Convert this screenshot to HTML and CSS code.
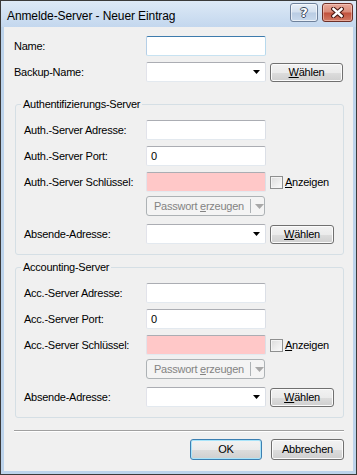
FILE: index.html
```html
<!DOCTYPE html>
<html>
<head>
<meta charset="utf-8">
<link rel="stylesheet" href="styles.css">
</head>
<body>
<div class="window">
  <div class="titlebar">
    <span class="title">Anmelde-Server - Neuer Eintrag</span>
    <div class="tbuttons">
      <div class="tbtn help"><span class="q">?</span></div>
      <div class="tbtn close">
        <svg width="13" height="11" viewBox="0 0 13 11">
          <path d="M2.5 2 L10.5 9 M10.5 2 L2.5 9" stroke="#4a1a14" stroke-width="4.6" stroke-linecap="square" fill="none"/>
          <path d="M2.5 2 L10.5 9 M10.5 2 L2.5 9" stroke="#ffffff" stroke-width="2.4" stroke-linecap="square" fill="none"/>
        </svg>
      </div>
    </div>
  </div>
  <div class="frame">
    <div class="content">
      <div class="row">
        <span class="lbl">Name:</span>
        <div class="input focus"></div>
      </div>
      <div class="row mt6">
        <span class="lbl">Backup-Name:</span>
        <div class="input combo"><svg width="7" height="4" viewBox="0 0 7 4"><path d="M0 0H7L3.5 4Z" fill="#000"/></svg></div>
        <button class="btn pick wide"><u>W</u>ählen</button>
      </div>

      <fieldset class="group first">
        <legend>Authentifizierungs-Server</legend>
        <div class="row">
          <span class="lbl glbl">Auth.-Server Adresse:</span>
          <div class="input"></div>
        </div>
        <div class="row mt6">
          <span class="lbl glbl">Auth.-Server Port:</span>
          <div class="input">0</div>
        </div>
        <div class="row mt6">
          <span class="lbl glbl">Auth.-Server Schlüssel:</span>
          <div class="input key"></div>
          <span class="check"></span>
          <span class="checklbl"><u>A</u>nzeigen</span>
        </div>
        <div class="row mt4">
          <span class="lbl glbl"></span>
          <div class="split"><span class="splittext">Passwort <u>e</u>rzeugen</span><span class="splitsep"></span><svg class="splitarrow" width="9" height="5" viewBox="0 0 9 5"><path d="M0 0H9L4.5 5Z" fill="#a8a8a8"/></svg></div>
        </div>
        <div class="row mt8">
          <span class="lbl glbl">Absende-Adresse:</span>
          <div class="input combo"><svg width="7" height="4" viewBox="0 0 7 4"><path d="M0 0H7L3.5 4Z" fill="#000"/></svg></div>
          <button class="btn pick"><u>W</u>ählen</button>
        </div>
      </fieldset>

      <fieldset class="group second">
        <legend>Accounting-Server</legend>
        <div class="row">
          <span class="lbl glbl">Acc.-Server Adresse:</span>
          <div class="input"></div>
        </div>
        <div class="row mt6">
          <span class="lbl glbl">Acc.-Server Port:</span>
          <div class="input">0</div>
        </div>
        <div class="row mt6">
          <span class="lbl glbl">Acc.-Server Schlüssel:</span>
          <div class="input key"></div>
          <span class="check"></span>
          <span class="checklbl"><u>A</u>nzeigen</span>
        </div>
        <div class="row mt4">
          <span class="lbl glbl"></span>
          <div class="split"><span class="splittext">Passwort <u>e</u>rzeugen</span><span class="splitsep"></span><svg class="splitarrow" width="9" height="5" viewBox="0 0 9 5"><path d="M0 0H9L4.5 5Z" fill="#a8a8a8"/></svg></div>
        </div>
        <div class="row mt8">
          <span class="lbl glbl">Absende-Adresse:</span>
          <div class="input combo"><svg width="7" height="4" viewBox="0 0 7 4"><path d="M0 0H7L3.5 4Z" fill="#000"/></svg></div>
          <button class="btn pick"><u>W</u>ählen</button>
        </div>
      </fieldset>

      <div class="sep"></div>
      <div class="footer">
        <button class="btn ok">OK</button>
        <button class="btn cancel">Abbrechen</button>
      </div>
    </div>
  </div>
</div>
</body>
</html>
```

FILE: styles.css
```css
html, body {
  margin: 0;
  padding: 0;
  background: #ffffff;
}

.window {
  width: 357px;
  height: 475px;
  box-sizing: border-box;
  border: 1px solid #3a3a3a;
  display: flex;
  flex-direction: column;
  background: #bcd3eb;
  font-family: "Liberation Sans", Arial, sans-serif;
  font-size: 11px;
  letter-spacing: -0.25px;
  color: #000;
}

.titlebar {
  height: 26px;
  flex: none;
  display: flex;
  align-items: flex-start;
  justify-content: space-between;
  padding: 0 3px 0 6px;
  background: linear-gradient(#dde9f6, #c3d7ee);
}

.title {
  font-size: 12px;
  line-height: 14px;
  margin-top: 8px;
  letter-spacing: -0.1px;
  color: #000;
}

.tbuttons {
  display: flex;
  gap: 4px;
  margin-top: 2px;
}

.tbtn {
  height: 19px;
  box-sizing: border-box;
  border-radius: 3px;
  display: flex;
  align-items: center;
  justify-content: center;
}

.help {
  width: 28px;
  border: 1px solid #6e819b;
  background: linear-gradient(#e6eef8 0%, #d2dfee 48%, #b9cce3 52%, #c8d9ec 100%);
  box-shadow: inset 0 0 0 1px rgba(255,255,255,0.6);
}

.q {
  font-family: "DejaVu Sans", sans-serif;
  font-weight: bold;
  font-size: 13px;
  line-height: 13px;
  letter-spacing: 0;
  color: #ffffff;
  text-shadow: 1px 0 0 #3b4a5e, -1px 0 0 #3b4a5e, 0 1px 0 #3b4a5e, 0 -1px 0 #3b4a5e;
}

.close {
  width: 31px;
  border: 1px solid #6d2f27;
  background: linear-gradient(#e9a99b 0%, #d98a78 48%, #c1503c 52%, #d27a64 100%);
  box-shadow: inset 0 0 0 1px rgba(255,220,210,0.5);
}

.frame {
  flex: 1;
  display: flex;
  padding: 0 3px 3px 3px;
  min-height: 0;
}

.content {
  flex: 1;
  background: #f0f0f0;
  padding: 9px 9px 0 10px;
  display: flex;
  flex-direction: column;
}

.row {
  display: flex;
  align-items: center;
  height: 20px;
  flex: none;
}

.mt4 { margin-top: 4px; }
.mt6 { margin-top: 6px; }
.mt8 { margin-top: 8px; }

.lbl {
  width: 132px;
  flex: none;
  white-space: nowrap;
}

.glbl {
  width: 122px;
}

.input {
  width: 120px;
  height: 20px;
  flex: none;
  box-sizing: border-box;
  border: 1px solid;
  border-color: #abadb3 #dbdfe6 #e3e9ef #e2e3ea;
  border-radius: 2px;
  background: #ffffff;
  padding-left: 4px;
  line-height: 18px;
}

.input.focus {
  border-color: #3d7bad #b7d9ed #c7e2f1 #b5cfe7;
}

.input.key {
  background: #ffc8c8;
}

.combo {
  display: flex;
  align-items: center;
  justify-content: flex-end;
  padding-right: 5px;
}

.btn {
  font-family: "Liberation Sans", Arial, sans-serif;
  font-size: 11px;
  letter-spacing: -0.25px;
  color: #000;
  box-sizing: border-box;
  border: 1px solid #707070;
  border-radius: 3px;
  background: linear-gradient(#f2f2f2 0%, #ebebeb 50%, #dddddd 51%, #cfcfcf 100%);
  box-shadow: inset 0 0 0 1px #fbfbfb;
  padding: 0;
  margin: 0;
  line-height: 15px;
}

.pick {
  width: 64px;
  height: 19px;
  margin-left: 4px;
}

.pick.wide {
  width: 73px;
}

.group {
  margin: 0;
  border: 1px solid #d5dfe5;
  border-radius: 3px;
  padding: 9px 8px 10px 8px;
  flex: none;
  margin-left: 1px;
  min-width: 0;
}

.group.first {
  margin-top: 16px;
}

.group.second {
  margin-top: 6px;
}

.group legend {
  padding: 0 2px;
  margin-left: -3px;
  line-height: 13px;
  font-size: 11px;
}

.check {
  width: 13px;
  height: 13px;
  box-sizing: border-box;
  border: 1px solid #8e8f8f;
  background: linear-gradient(135deg, #dcdcdc, #fbfbfb);
  box-shadow: inset 0 0 0 1px #f4f4f4;
  margin-left: 4px;
  flex: none;
}

.checklbl {
  margin-left: 2px;
  white-space: nowrap;
}

.split {
  width: 119px;
  height: 20px;
  box-sizing: border-box;
  border: 1px solid #adb2b5;
  border-radius: 3px;
  background: #f4f4f4;
  display: flex;
  align-items: center;
  color: #838383;
  flex: none;
}

.splittext {
  padding-left: 7px;
  width: 96px;
  white-space: nowrap;
}

.splitsep {
  width: 1px;
  height: 14px;
  background: #adb2b5;
}

.splitarrow {
  margin-left: 4px;
}

.sep {
  height: 1px;
  background: #a0a0a0;
  border-bottom: 1px solid #ffffff;
  margin-top: 12px;
  flex: none;
}

.footer {
  display: flex;
  justify-content: flex-end;
  gap: 9px;
  margin-top: 7px;
}

.ok {
  width: 72px;
  height: 21px;
  border-color: #3c7fb1;
  box-shadow: inset 0 0 0 1px #a8e4fa;
}

.cancel {
  width: 73px;
  height: 21px;
}
```
